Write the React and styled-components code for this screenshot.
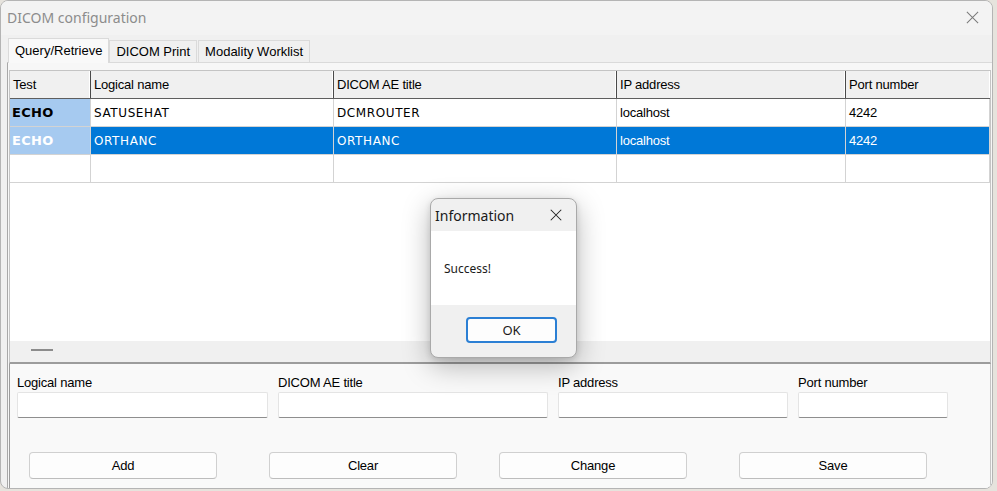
import React from "react";
import styled, { createGlobalStyle } from "styled-components";

const GlobalStyle = createGlobalStyle`
  html, body {
    margin: 0;
    padding: 0;
    background: #e6e3dd;
  }
  body {
    width: 997px;
    height: 491px;
    overflow: hidden;
    font-family: "Liberation Sans", Arial, sans-serif;
  }
`;

const columns = [
  { key: "test", title: "Test", width: 81 },
  { key: "name", title: "Logical name", width: 243 },
  { key: "ae", title: "DICOM AE title", width: 283 },
  { key: "ip", title: "IP address", width: 229 },
  { key: "port", title: "Port number", width: 144 },
];

const rows = [
  { name: "SATUSEHAT", ae: "DCMROUTER", ip: "localhost", port: "4242" },
  { name: "ORTHANC", ae: "ORTHANC", ip: "localhost", port: "4242", selected: true },
  { name: "", ae: "", ip: "", port: "", empty: true },
];

const Window = styled.div`
  position: relative;
  width: 993px;
  height: 489px;
  box-sizing: border-box;
  background: #f0f0f0;
  border: 1px solid #b4b4b4;
  border-radius: 8px;
  overflow: hidden;
  display: flex;
  flex-direction: column;
`;

const TitleBar = styled.div`
  height: 34px;
  flex: none;
  display: flex;
  align-items: center;
  justify-content: space-between;
  padding: 0 12px 2px 6px;
  box-sizing: border-box;
  background: #f3f3f3;
  font-family: "Noto Sans", "Open Sans", sans-serif;
  font-size: 14px;
  color: #8c8c8c;
`;

const CloseButton = styled.div`
  width: 16px;
  height: 16px;
  display: flex;
  align-items: center;
  justify-content: center;
`;

const TabBar = styled.div`
  display: flex;
  align-items: flex-end;
  height: 25px;
  margin-top: 2px;
  padding-left: 7px;
  flex: none;
`;

const Tab = styled.div`
  height: ${(p) => (p.$active ? 25 : 22)}px;
  box-sizing: border-box;
  padding: 0 ${(p) => (p.$active ? 6 : 6)}px ${(p) => (p.$active ? 2 : 0)}px;
  display: flex;
  align-items: center;
  font-size: 13px;
  color: #000;
  background: ${(p) => (p.$active ? "#f9f9f9" : "#f0f0f0")};
  border: 1px solid #dadada;
  border-bottom: none;
  margin-right: ${(p) => (p.$active ? 0 : 1)}px;
  position: relative;
  z-index: ${(p) => (p.$active ? 2 : 1)};
  margin-bottom: ${(p) => (p.$active ? -1 : 0)}px;
`;

const TabPage = styled.div`
  flex: 1;
  margin-left: 6px;
  background: #f7f7f7;
  border-top: 1px solid #dadada;
  border-left: 1px solid #a8a8a8;
  display: flex;
  flex-direction: column;
  padding-top: 7px;
`;

const GridBox = styled.div`
  margin-left: 1px;
  width: 982px;
  height: 294px;
  box-sizing: border-box;
  border: 1px solid #c4c4c4;
  border-bottom: 2px solid #9c9c9c;
  background: #ffffff;
  display: flex;
  flex-direction: column;
`;

const GridBody = styled.div`
  flex: 1;
`;

const Row = styled.div`
  display: flex;
  height: 28px;
  box-sizing: border-box;
  border-bottom: 1px solid ${(p) => (p.$header ? "#5e5e5e" : "#d3d3d3")};
  background: ${(p) => (p.$header ? "#f0f0f0" : p.$selected ? "#0078d7" : "#ffffff")};
`;

const HeaderCell = styled.div`
  box-sizing: border-box;
  padding-left: 3px;
  display: flex;
  align-items: center;
  font-size: 13px;
  letter-spacing: -0.2px;
  color: #000;
  border-right: ${(p) => (p.$last ? "none" : "1px solid #4a4a4a")};
  box-shadow: inset -1px 0 0 #ffffff;
`;

const Cell = styled.div`
  box-sizing: border-box;
  padding-left: 3px;
  display: flex;
  align-items: center;
  border-right: 1px solid #d3d3d3;
  font-family: ${(p) =>
    p.$mono ? '"DejaVu Sans", sans-serif' : '"Liberation Sans", Arial, sans-serif'};
  font-size: ${(p) => (p.$mono ? 12 : 13)}px;
  letter-spacing: ${(p) => (p.$mono ? "0.6px" : "-0.2px")};
  color: ${(p) => (p.$selected ? "#ffffff" : "#000000")};
`;

const EchoCell = styled.div`
  box-sizing: border-box;
  padding-left: 2px;
  display: flex;
  align-items: center;
  background: ${(p) => (p.$empty ? "#ffffff" : "#a6caf0")};
  border-right: 1px solid #d3d3d3;
  font-family: "DejaVu Sans", sans-serif;
  font-weight: bold;
  font-size: 13px;
  letter-spacing: 0.3px;
  color: ${(p) => (p.$selected ? "#ffffff" : "#000000")};
`;

const StatusStrip = styled.div`
  height: 21px;
  flex: none;
  background: #f0f0f0;
  display: flex;
  align-items: center;
  padding-left: 21px;
  padding-bottom: 4px;
  box-sizing: border-box;
`;

const Dash = styled.div`
  width: 22px;
  height: 2px;
  background: #8c8c8c;
`;

const EditPanel = styled.div`
  flex: 1;
  margin-left: 1px;
  width: 982px;
  box-sizing: border-box;
  background: #f9f9f9;
  border-left: 1px solid #9c9c9c;
  border-right: 1px solid #c4c4c4;
  padding: 9px 0 0 7px;
`;

const FieldRow = styled.div`
  display: flex;
  gap: 10px;
`;

const Field = styled.div`
  display: flex;
  flex-direction: column;
  width: ${(p) => p.$width}px;
`;

const Label = styled.label`
  height: 18px;
  font-size: 13px;
  letter-spacing: -0.2px;
  color: #000;
  display: flex;
  align-items: center;
`;

const Input = styled.div`
  height: 26px;
  box-sizing: border-box;
  margin-top: 1px;
  background: #ffffff;
  border: 1px solid #e4e4e4;
  border-bottom: 1px solid #8e8e8e;
  border-radius: 2px;
`;

const ButtonRow = styled.div`
  display: grid;
  grid-template-columns: 240px 230px 240px 188px;
  margin-top: 34px;
  padding-left: 12px;
`;

const Button = styled.div`
  width: 188px;
  height: 27px;
  box-sizing: border-box;
  background: #fdfdfd;
  border: 1px solid #d0d0d0;
  border-bottom-color: #bdbdbd;
  border-radius: 4px;
  display: flex;
  align-items: center;
  justify-content: center;
  font-size: 13px;
  letter-spacing: -0.2px;
  color: #000;
`;

const Dialog = styled.div`
  position: absolute;
  left: 429px;
  top: 197px;
  width: 147px;
  height: 160px;
  box-sizing: border-box;
  background: #f0f0f0;
  border: 1px solid #a9a9a9;
  border-radius: 8px;
  overflow: hidden;
  box-shadow: 0 8px 28px rgba(0, 0, 0, 0.28), 0 2px 6px rgba(0, 0, 0, 0.12);
  display: flex;
  flex-direction: column;
  font-family: "Noto Sans", "Open Sans", sans-serif;
`;

const DialogTitle = styled.div`
  height: 32px;
  display: flex;
  align-items: center;
  justify-content: space-between;
  padding: 0 13px 0 4px;
  font-size: 14px;
  color: #1a1a1a;
`;

const DialogBody = styled.div`
  height: 74px;
  background: #ffffff;
  display: flex;
  align-items: center;
  padding-left: 13px;
  font-size: 12px;
  color: #1a1a1a;
`;

const DialogFooter = styled.div`
  flex: 1;
  display: flex;
  align-items: center;
  justify-content: flex-end;
  padding-right: 19px;
  padding-bottom: 2px;
`;

const OkButton = styled.div`
  width: 91px;
  height: 26px;
  box-sizing: border-box;
  background: #fdfdfd;
  border: 2px solid #2b7fd4;
  border-radius: 4px;
  display: flex;
  align-items: center;
  justify-content: center;
  font-size: 13px;
  color: #1a1a1a;
`;

const XIcon = ({ size, color, stroke }) => (
  <svg width={size} height={size} viewBox="0 0 16 16">
    <path d="M2 2 L14 14 M14 2 L2 14" stroke={color} strokeWidth={stroke} fill="none" />
  </svg>
);

const fields = [
  { label: "Logical name", width: 251 },
  { label: "DICOM AE title", width: 270 },
  { label: "IP address", width: 230 },
  { label: "Port number", width: 150 },
];

export default function App() {
  return (
    <>
      <GlobalStyle />
      <Window>
        <TitleBar>
          <span>DICOM configuration</span>
          <CloseButton>
            <XIcon size={15} color="#7a7a7a" stroke={1.1} />
          </CloseButton>
        </TitleBar>
        <TabBar>
          <Tab $active>Query/Retrieve</Tab>
          <Tab>DICOM Print</Tab>
          <Tab>Modality Worklist</Tab>
        </TabBar>
        <TabPage>
          <GridBox>
            <Row $header>
              {columns.map((c, i) => (
                <HeaderCell
                  key={c.key}
                  $last={i === columns.length - 1}
                  style={{ width: c.width }}
                >
                  {c.title}
                </HeaderCell>
              ))}
            </Row>
            <GridBody>
              {rows.map((r, i) => (
                <Row key={i} $selected={r.selected}>
                  <EchoCell
                    $selected={r.selected}
                    $empty={r.empty}
                    style={{ width: columns[0].width }}
                  >
                    {r.empty ? "" : "ECHO"}
                  </EchoCell>
                  <Cell $mono $selected={r.selected} style={{ width: columns[1].width }}>
                    {r.name}
                  </Cell>
                  <Cell $mono $selected={r.selected} style={{ width: columns[2].width }}>
                    {r.ae}
                  </Cell>
                  <Cell $selected={r.selected} style={{ width: columns[3].width }}>
                    {r.ip}
                  </Cell>
                  <Cell $selected={r.selected} style={{ width: columns[4].width }}>
                    {r.port}
                  </Cell>
                </Row>
              ))}
            </GridBody>
            <StatusStrip>
              <Dash />
            </StatusStrip>
          </GridBox>
          <EditPanel>
            <FieldRow>
              {fields.map((f) => (
                <Field key={f.label} $width={f.width}>
                  <Label>{f.label}</Label>
                  <Input />
                </Field>
              ))}
            </FieldRow>
            <ButtonRow>
              <Button>Add</Button>
              <Button>Clear</Button>
              <Button>Change</Button>
              <Button>Save</Button>
            </ButtonRow>
          </EditPanel>
        </TabPage>
        <Dialog>
          <DialogTitle>
            <span>Information</span>
            <XIcon size={14} color="#222" stroke={1.2} />
          </DialogTitle>
          <DialogBody>Success!</DialogBody>
          <DialogFooter>
            <OkButton>OK</OkButton>
          </DialogFooter>
        </Dialog>
      </Window>
    </>
  );
}
